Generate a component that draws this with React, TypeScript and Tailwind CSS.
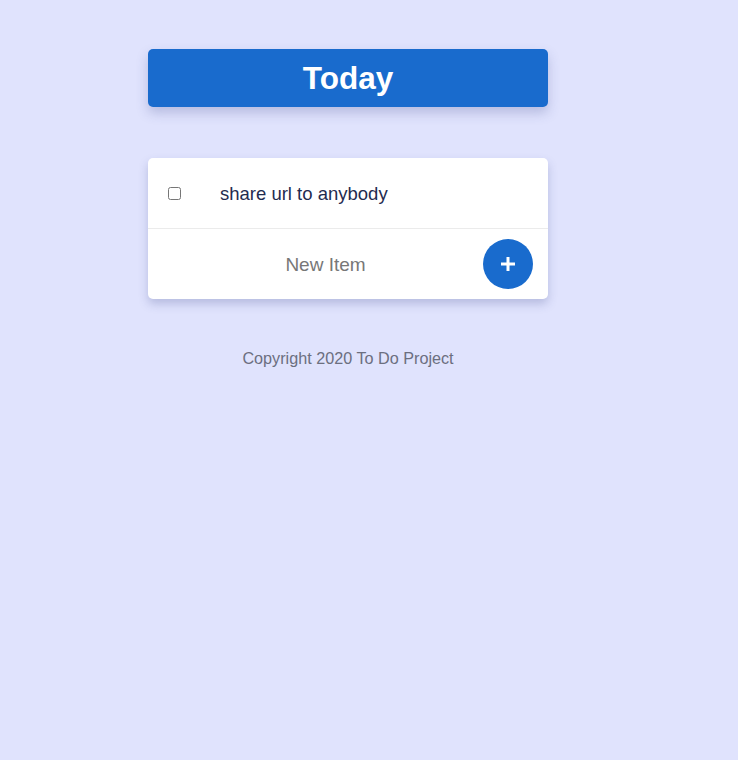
import { useState } from "react"

export default function App() {
  const [done, setDone] = useState(false)
  return (
    <div className="min-h-[760px] bg-[#e0e3fd] pt-[49px] font-['Liberation_Sans',Arial,sans-serif]">
      <div className="ml-[148px] w-[400px]">
        <div className="flex h-[58px] items-center justify-center rounded-[5px] bg-[#196bcd] shadow-[0_6px_12px_rgba(60,70,140,0.25)]">
          <h1 className="pt-[1px] text-[31.5px] font-bold text-white">Today</h1>
        </div>

        <div className="mt-[51px] rounded-[5px] bg-white shadow-[0_5px_10px_rgba(60,70,140,0.25)]">
          <div className="flex h-[71px] items-center border-b border-[#ebebeb]">
            <input
              type="checkbox"
              checked={done}
              onChange={() => setDone(!done)}
              className="ml-[20px] h-[13px] w-[13px]"
            />
            <p className="ml-[39px] pt-[2px] text-[18.5px] text-[#1f2c50]">share url to anybody</p>
          </div>
          <div className="flex h-[70px] items-center pl-[20px] pr-[15px]">
            <input
              type="text"
              placeholder="New Item"
              className="min-w-0 flex-1 bg-transparent pt-[3px] text-center text-[19px] text-[#333] outline-none placeholder:text-[#777]"
            />
            <button className="flex h-[50px] w-[50px] items-center justify-center rounded-full bg-[#196bcd] text-white">
              <svg width="18" height="18" viewBox="0 0 18 18">
                <path d="M9 2v14M2 9h14" stroke="white" strokeWidth="3" />
              </svg>
            </button>
          </div>
        </div>

        <footer className="mt-[47px] text-center text-[16.2px] text-[#6c6f80]">Copyright 2020 To Do Project</footer>
      </div>
    </div>
  )
}
